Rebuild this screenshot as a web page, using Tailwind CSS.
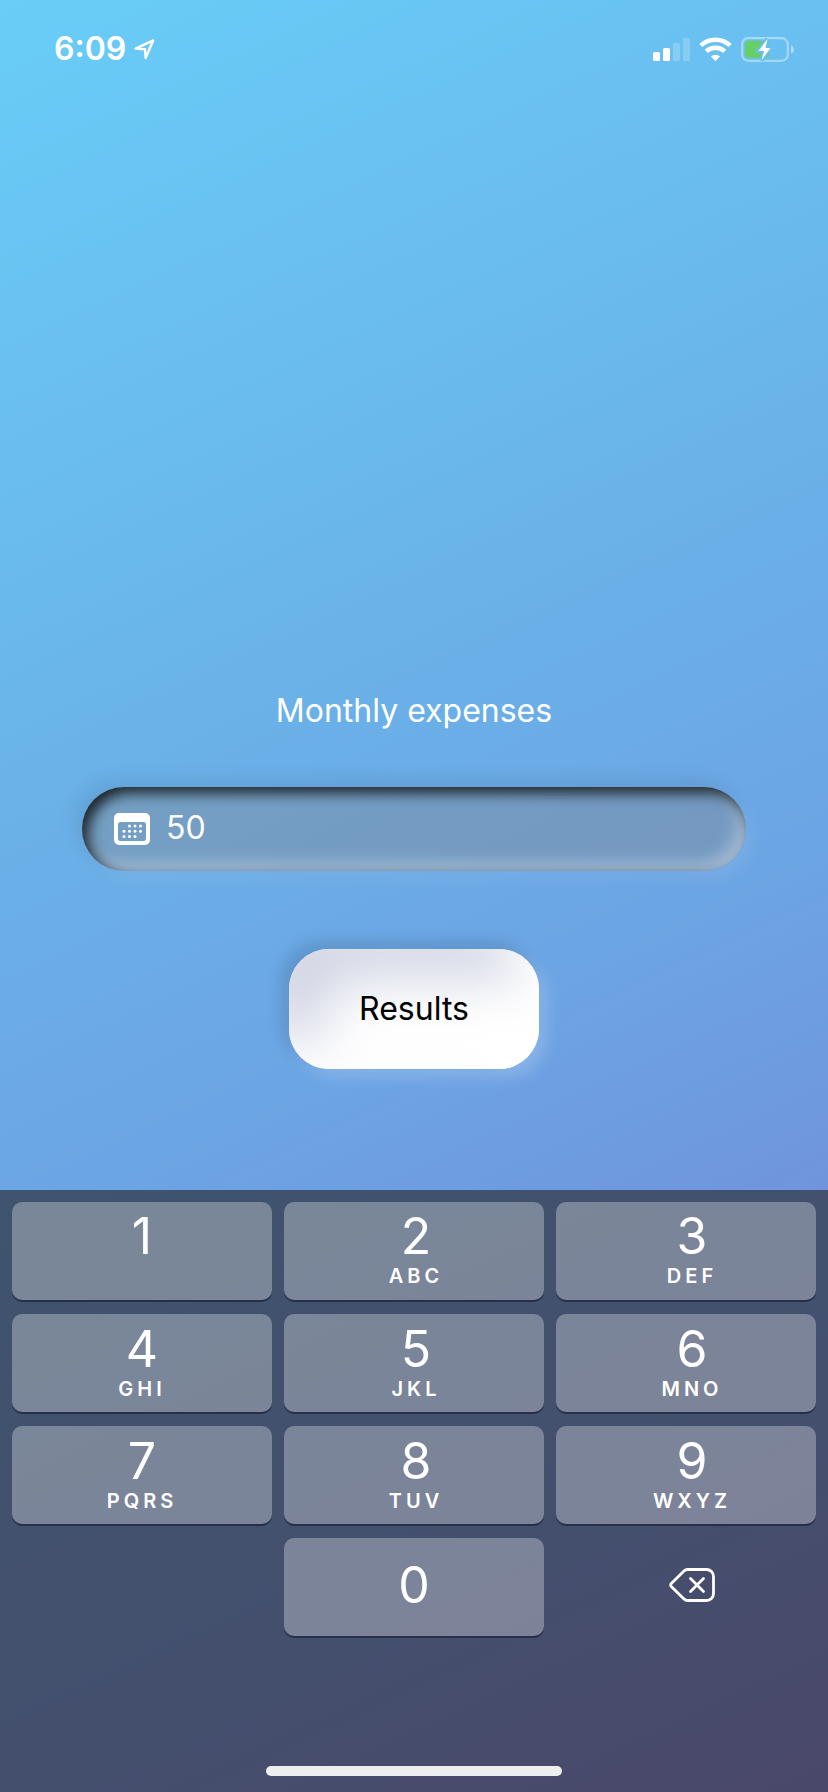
<!DOCTYPE html>
<html lang="en">
<head>
<meta charset="utf-8">
<meta name="viewport" content="width=device-width, initial-scale=1">
<title>Monthly expenses</title>
<script src="https://cdn.jsdelivr.net/npm/@tailwindcss/browser@4"></script>
</head>
<body class="flex min-h-screen flex-col bg-[linear-gradient(155deg,#69cdf8_0%,#6ab3e9_36%,#6ca4e4_57%,#7094dc_73%,#7474bf_100%)] font-[Inter,'Liberation_Sans',sans-serif] text-white">
  <header class="flex h-[98px] items-center justify-between pr-[34px] pl-[54px]">
    <div class="flex items-center gap-2">
      <time class="text-[32px] leading-10 font-semibold">6:09</time>
      <svg class="h-[22px] w-[21px]" viewBox="0 0 21 22" fill="none" stroke="currentColor" stroke-width="2.4" stroke-linejoin="round" aria-label="Location in use"><path d="M1.6 10.600 19.200 2.400 11.600 20 11 11.200Z"/></svg>
    </div>
    <div class="flex items-center gap-[9px]">
      <svg class="h-[25px] w-[37px]" viewBox="0 0 37 25" fill="currentColor" aria-label="Signal">
        <rect x="0" y="15" width="7" height="9" rx="1.6"/><rect x="10" y="11" width="7" height="13" rx="1.6"/>
        <g opacity=".2"><rect x="20" y="6" width="7" height="18" rx="1.6"/><rect x="30" y="1" width="7" height="23" rx="1.6"/></g>
      </svg>
      <svg class="h-[25px] w-[33px]" viewBox="0 0 33 25" fill="none" stroke="currentColor" stroke-width="4.4" aria-label="Wi-Fi">
        <path d="M1.8 8.5A21.5 21.5 0 0 1 31.2 8.5M7.3 14.3A13.5 13.5 0 0 1 25.7 14.3"/><path stroke="none" fill="currentColor" d="M16.5 24.2 12 19.4A6.6 6.6 0 0 1 21 19.4Z"/>
      </svg>
      <svg class="h-[25px] w-[53px]" viewBox="0 0 53 25" fill="none" aria-label="Battery charging">
        <mask id="gap"><rect width="53" height="25" fill="#fff"/><path d="M26.5 2 17.5 14H23L20.5 23.5 29.5 11H24.5Z" fill="#000" stroke="#000" stroke-width="4"/></mask>
        <g mask="url(#gap)"><rect x="1.2" y="1.2" width="45.6" height="22.6" rx="6" stroke="#fff" stroke-opacity=".4" stroke-width="2.2"/><rect x="4" y="4" width="24" height="17" rx="3" fill="#68ce67"/></g>
        <path d="M50 8.5C54 9.5 54 15.5 50 16.5Z" fill="#fff" fill-opacity=".45"/>
        <path d="M26.5 2 17.5 14H23L20.5 23.5 29.5 11H24.5Z" fill="#fff"/>
      </svg>
    </div>
  </header>

  <main class="flex flex-1 flex-col items-center justify-end px-[82px] pb-[121px]">
    <label for="expenses" class="text-[32px] leading-10 font-normal">Monthly expenses</label>
    <div class="mt-14 flex h-[84px] w-full items-center gap-4 rounded-full bg-[#868386]/37 px-8 shadow-[inset_6px_6px_14px_rgba(0,0,0,0.8),inset_-6px_-6px_18px_rgba(255,255,255,0.42),-8px_-8px_18px_rgba(0,0,0,0.08),8px_8px_16px_rgba(255,255,255,0.08)]">
      <svg class="h-8 w-9 shrink-0" viewBox="0 0 36 32" fill="currentColor" aria-hidden="true">
        <path fill-rule="evenodd" d="M5 0H31A5 5 0 0 1 36 5V27A5 5 0 0 1 31 32H5A5 5 0 0 1 0 27V5A5 5 0 0 1 5 0ZM6.5 9A2.5 2.5 0 0 0 4 11.500V25.500A2.500 2.500 0 0 0 6.500 28H29.500A2.500 2.500 0 0 0 32 25.500V11.500A2.500 2.500 0 0 0 29.500 9Z"/>
        <g><circle cx="15.500" cy="13" r="1.500"/><circle cx="21" cy="13" r="1.500"/><circle cx="26.500" cy="13" r="1.500"/><circle cx="10" cy="18.300" r="1.500"/><circle cx="15.500" cy="18.300" r="1.500"/><circle cx="21" cy="18.300" r="1.500"/><circle cx="26.500" cy="18.300" r="1.500"/><circle cx="10" cy="23.500" r="1.500"/><circle cx="15.500" cy="23.500" r="1.500"/><circle cx="21" cy="23.500" r="1.500"/></g>
      </svg>
      <input id="expenses" type="text" inputmode="numeric" value="50" class="min-w-0 flex-1 bg-transparent pb-[2px] text-[32px] leading-10 font-normal outline-none">
    </div>
    <button type="button" class="mt-[78px] h-[120px] w-[250px] rounded-[40px] bg-white text-[32px] leading-10 text-black shadow-[inset_-24px_-24px_48px_#fff,inset_28px_28px_60px_#cfd3e2,-8px_-8px_16px_rgba(0,0,0,0.12),8px_8px_16px_rgba(255,255,255,0.2)]">Results</button>
  </main>

  <section aria-label="Number pad" class="bg-[linear-gradient(155deg,#3f546e,#444f6e_60%,#4a486a)] px-3 pt-3 pb-4">
    <div class="grid grid-cols-3 gap-x-3 gap-y-[14px]">
      <button type="button" class="flex h-[98px] flex-col items-center rounded-[10px] bg-white/30 pt-[9px] shadow-[0_2px_0_#273044]"><span class="text-[50px] leading-[50px] font-normal">1</span></button>
      <button type="button" class="flex h-[98px] flex-col items-center rounded-[10px] bg-white/30 pt-[9px] pl-1 shadow-[0_2px_0_#273044]"><span class="text-[50px] leading-[50px] font-normal">2</span><span class="text-[20px] leading-[30px] font-semibold tracking-[4px]">ABC</span></button>
      <button type="button" class="flex h-[98px] flex-col items-center rounded-[10px] bg-white/30 pt-[9px] pl-3 shadow-[0_2px_0_#273044]"><span class="text-[50px] leading-[50px] font-normal">3</span><span class="text-[20px] leading-[30px] font-semibold tracking-[4px]">DEF</span></button>
      <button type="button" class="flex h-[98px] flex-col items-center rounded-[10px] bg-white/30 pt-[10px] shadow-[0_2px_0_#273044]"><span class="text-[50px] leading-[50px] font-normal">4</span><span class="text-[20px] leading-[30px] font-semibold tracking-[4px]">GHI</span></button>
      <button type="button" class="flex h-[98px] flex-col items-center rounded-[10px] bg-white/30 pt-[10px] pl-1 shadow-[0_2px_0_#273044]"><span class="text-[50px] leading-[50px] font-normal">5</span><span class="text-[20px] leading-[30px] font-semibold tracking-[4px]">JKL</span></button>
      <button type="button" class="flex h-[98px] flex-col items-center rounded-[10px] bg-white/30 pt-[10px] pl-3 shadow-[0_2px_0_#273044]"><span class="text-[50px] leading-[50px] font-normal">6</span><span class="text-[20px] leading-[30px] font-semibold tracking-[4px]">MNO</span></button>
      <button type="button" class="flex h-[98px] flex-col items-center rounded-[10px] bg-white/30 pt-[10px] shadow-[0_2px_0_#273044]"><span class="text-[50px] leading-[50px] font-normal">7</span><span class="text-[20px] leading-[30px] font-semibold tracking-[4px]">PQRS</span></button>
      <button type="button" class="flex h-[98px] flex-col items-center rounded-[10px] bg-white/30 pt-[10px] pl-1 shadow-[0_2px_0_#273044]"><span class="text-[50px] leading-[50px] font-normal">8</span><span class="text-[20px] leading-[30px] font-semibold tracking-[4px]">TUV</span></button>
      <button type="button" class="flex h-[98px] flex-col items-center rounded-[10px] bg-white/30 pt-[10px] pl-3 shadow-[0_2px_0_#273044]"><span class="text-[50px] leading-[50px] font-normal">9</span><span class="text-[20px] leading-[30px] font-semibold tracking-[4px]">WXYZ</span></button>
      <button type="button" class="col-start-2 flex h-[98px] items-center justify-center rounded-[10px] bg-white/30 pb-1 shadow-[0_2px_0_#273044]"><span class="text-[50px] leading-[50px] font-normal">0</span></button>
      <button type="button" aria-label="Delete" class="flex h-[98px] items-center justify-center pb-1 pl-3">
        <svg class="h-[34px] w-[46px]" viewBox="0 0 46 34" fill="none" stroke="currentColor" stroke-width="2.800" stroke-linejoin="round" stroke-linecap="round"><path d="M18.500 1.500H37.500A7 7 0 0 1 44.500 8.500V25.500A7 7 0 0 1 37.500 32.500H18.500Q16.500 32.500 15 31L2.300 18.500Q1 17 2.300 15.500L15 3Q16.500 1.500 18.500 1.500Z"/><path d="M21.500 10.500 34.500 23.500M34.500 10.500 21.500 23.500"/></svg>
      </button>
    </div>
    <div class="mx-auto mt-[130px] h-[10px] w-[296px] rounded-full bg-[#eee]"></div>
  </section>
</body>
</html>
